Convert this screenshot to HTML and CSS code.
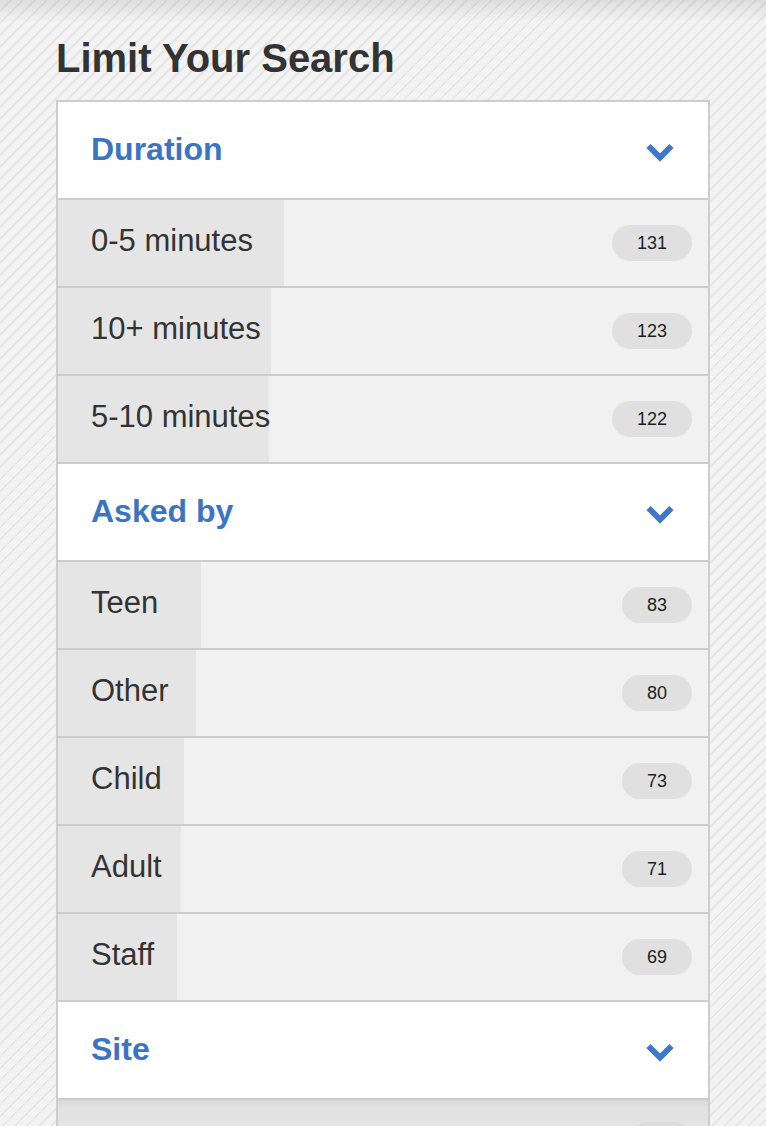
FILE: index.html
```html
<!DOCTYPE html>
<html lang="en">
<head>
<meta charset="utf-8">
<title>Limit Your Search</title>
<link rel="stylesheet" href="styles.css">
</head>
<body>
<div class="page">
  <h2 class="title">Limit Your Search</h2>
  <div class="panel">
    <div class="group-head">
      <span class="group-name">Duration</span>
      <svg class="chev" viewBox="0 0 28 20" width="28" height="20"><path d="M2.5 4 L14 15.5 L25.5 4" fill="none" stroke="#3f78c8" stroke-width="6"/></svg>
    </div>
    <div class="row" style="--pct:34.84%"><span class="label">0-5 minutes</span><span class="badge">131</span></div>
    <div class="row" style="--pct:32.71%"><span class="label">10+ minutes</span><span class="badge">123</span></div>
    <div class="row" style="--pct:32.45%"><span class="label">5-10 minutes</span><span class="badge">122</span></div>

    <div class="group-head">
      <span class="group-name">Asked by</span>
      <svg class="chev" viewBox="0 0 28 20" width="28" height="20"><path d="M2.5 4 L14 15.5 L25.5 4" fill="none" stroke="#3f78c8" stroke-width="6"/></svg>
    </div>
    <div class="row" style="--pct:22.07%"><span class="label">Teen</span><span class="badge">83</span></div>
    <div class="row" style="--pct:21.28%"><span class="label">Other</span><span class="badge">80</span></div>
    <div class="row" style="--pct:19.41%"><span class="label">Child</span><span class="badge">73</span></div>
    <div class="row" style="--pct:18.88%"><span class="label">Adult</span><span class="badge">71</span></div>
    <div class="row" style="--pct:18.35%"><span class="label">Staff</span><span class="badge">69</span></div>

    <div class="group-head">
      <span class="group-name">Site</span>
      <svg class="chev" viewBox="0 0 28 20" width="28" height="20"><path d="M2.5 4 L14 15.5 L25.5 4" fill="none" stroke="#3f78c8" stroke-width="6"/></svg>
    </div>
    <div class="row row-dim"><span class="label"></span><span class="badge badge-dim">&nbsp;</span></div>
  </div>
</div>
</body>
</html>
```
FILE: styles.css
```css
html {
  min-height: 100%;
}
body {
  margin: 0;
  min-height: 1126px;
  font-family: "Liberation Sans", Arial, Helvetica, sans-serif;
  color: #333;
  background-color: #f2f2f2;
  background-image:
    linear-gradient(to bottom, rgba(0,0,0,0.09), rgba(0,0,0,0) 22px),
    repeating-linear-gradient(135deg, #f3f3f3 0px, #f3f3f3 6.5px, #e6e6e6 6.5px, #e6e6e6 8.5px);
  background-repeat: no-repeat, repeat;
  background-size: 100% 22px, auto;
  overflow: hidden;
}
.page {
  padding: 35px 56px 0 56px;
}
.title {
  margin: 0 0 19px 0;
  font-size: 40px;
  line-height: 46px;
  font-weight: bold;
  color: #333;
}
.panel {
  width: 650px;
  border: 2px solid #cdcdcd;
  border-bottom: none;
  background: #fff;
}
.group-head {
  height: 96px;
  display: flex;
  align-items: center;
  justify-content: space-between;
  padding: 0 34px 0 33px;
  background: #fff;
  border-bottom: 2px solid #cdcdcd;
}
.group-name {
  font-size: 32px;
  font-weight: bold;
  color: #3b74c3;
  padding-bottom: 1px;
}
.chev {
  display: block;
  margin-top: 3px;
}
.row {
  height: 86px;
  display: flex;
  align-items: center;
  justify-content: space-between;
  padding: 0 16px 0 33px;
  border-bottom: 2px solid #cdcdcd;
  background: linear-gradient(to right, #e5e5e5 0, #e5e5e5 var(--pct), #f1f1f1 var(--pct), #f1f1f1 100%);
}
.label {
  font-size: 31px;
  color: #333;
  padding-bottom: 4px;
}
.badge {
  height: 36px;
  line-height: 36px;
  padding: 0 25px;
  border-radius: 18px;
  background: #e0e0e0;
  color: #1e1e1e;
  font-size: 18px;
}
.row-dim {
  background: linear-gradient(to bottom, #d9d9d9 0, #e3e3e3 10px, #e2e2e2 20px, #e6e6e6 26px, #e6e6e6 100%);
  align-items: flex-start;
  padding-top: 22px;
  box-sizing: border-box;
}
.badge-dim {
  background: #dcdcdc;
  width: 12px;
}
```
